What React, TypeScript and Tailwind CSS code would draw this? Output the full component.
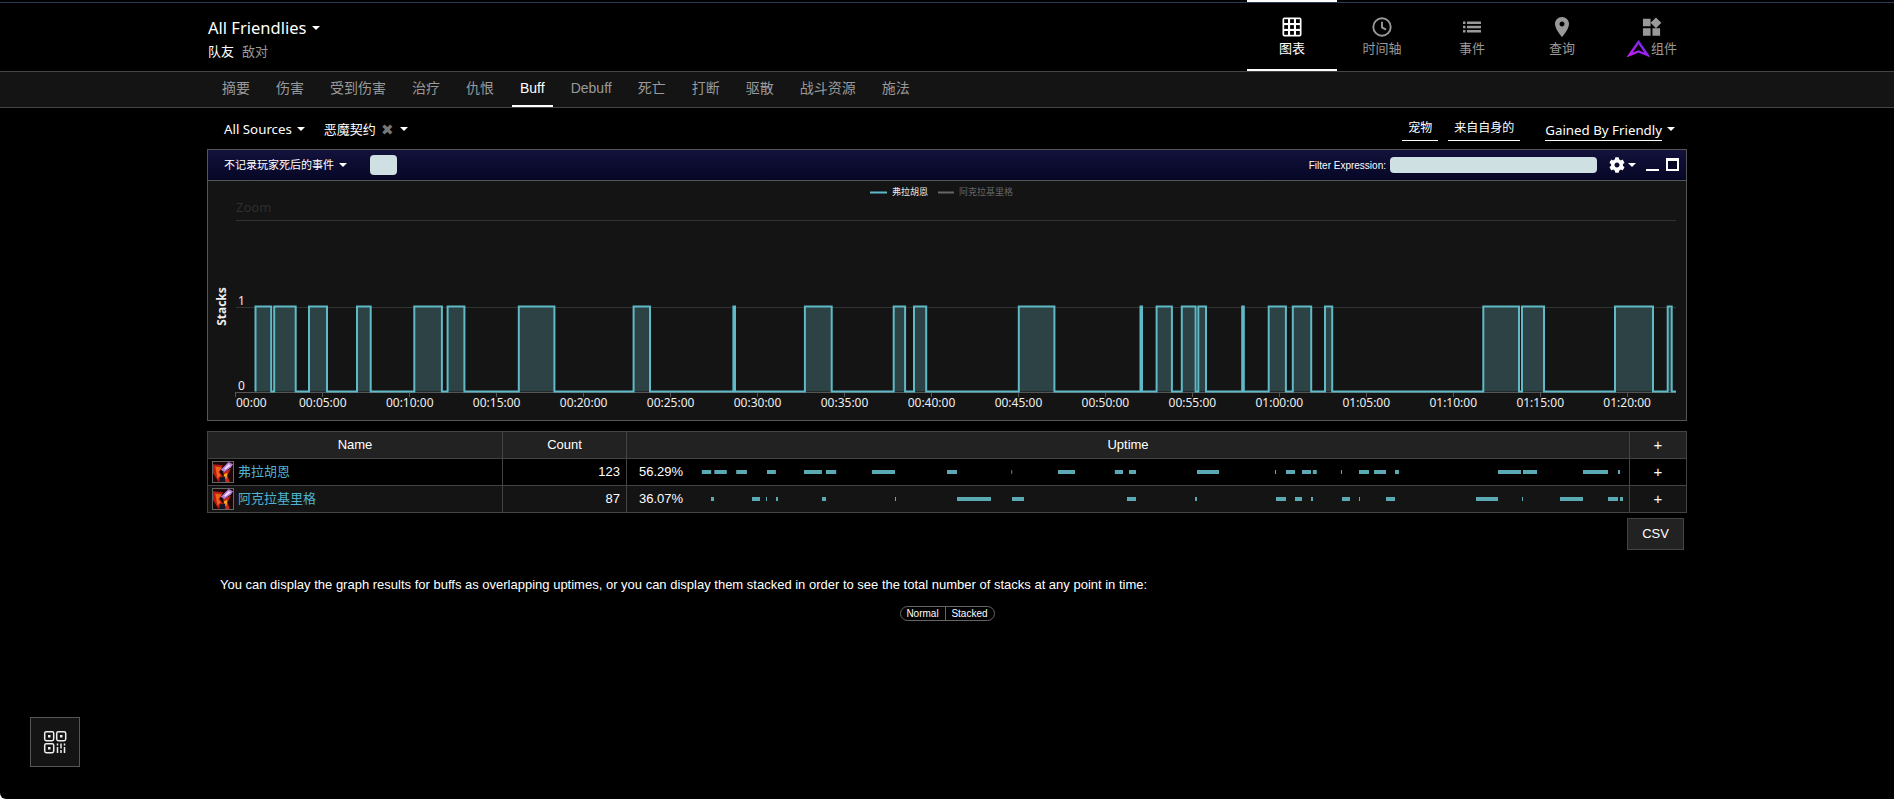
import React from "react";
import { FaCog } from "react-icons/fa";

const segs: [number, number][] = [
  [255.5, 271.2], [274.2, 295.7], [309, 327], [357, 370.7], [414.3, 441.9], [447.6, 464.4], [518.8, 554.4],
  [633.6, 650], [733.4, 735], [804.9, 831.7], [893.7, 905.1], [914, 926.2], [1018.8, 1054.4], [1140.5, 1142],
  [1156.6, 1171.9], [1181.8, 1195.6], [1198.3, 1206], [1242.2, 1243.8], [1268.7, 1285.9], [1292.8, 1311.2],
  [1325, 1332.2], [1483.3, 1519], [1522, 1544], [1615, 1653], [1667.7, 1671.7],
];
const row1: [number, number][] = [
  [701.8, 711.2], [714.3, 726.8], [736.2, 746.9], [767, 775.9], [804, 821.9], [825.9, 836.2], [871.9, 895], [947, 957],
  [1011.4, 1012.2], [1058, 1075], [1114.8, 1123], [1129, 1136], [1197, 1219], [1275, 1276], [1286, 1295], [1302, 1311],
  [1312.8, 1316.8], [1341, 1342], [1359, 1369], [1374, 1386], [1395, 1399], [1498, 1521], [1523, 1537], [1583, 1608], [1618, 1620],
];
const row2: [number, number][] = [
  [711, 714], [752, 760], [766, 767], [776, 778], [822, 826], [895, 896], [957, 991], [1012, 1024], [1127, 1136],
  [1195, 1197], [1276, 1286], [1295, 1302], [1311, 1313], [1342, 1350], [1359, 1360], [1386, 1395], [1476, 1498],
  [1522, 1523], [1560, 1583], [1608, 1618], [1620, 1623],
];

const TOP = 306.5;
const BASE = 391.5;
const linePath = `M255.5 ${BASE} ` + segs.map(([a, b]) => `H${a} V${TOP} H${b} V${BASE}`).join(" ") + " H1676";
const TICK0 = 235.3;
const STEP = 86.96;
const fmt = (i: number) => {
  const m = i * 5;
  const h = Math.floor(m / 60);
  const mm = m % 60;
  return `${String(h).padStart(2, "0")}:${String(mm).padStart(2, "0")}:00`;
};

const SANS = "font-['Liberation_Sans','Noto_Sans_CJK_SC',sans-serif]";
const UI = "font-['Noto_Sans','Noto_Sans_CJK_SC',sans-serif]";

function Caret({ c = "border-t-white" }: { c?: string }) {
  return <span className={`inline-block h-0 w-0 border-x-[4px] border-t-[4px] border-x-transparent ${c}`} />;
}

function GridIcon() {
  return (
    <svg width="20" height="20" viewBox="0 0 20 20">
      <rect x="0.5" y="0.5" width="19" height="19" rx="2" fill="#fff" />
      {[2.2, 8.1, 14].map((x) =>
        [2.2, 8.1, 14].map((y) => <rect key={`${x}-${y}`} x={x} y={y} width="3.8" height="3.8" fill="#000" />)
      )}
    </svg>
  );
}
function ClockIcon() {
  return (
    <svg width="20" height="20" viewBox="0 0 20 20" fill="none" stroke="#999" strokeWidth="1.9">
      <circle cx="10" cy="10" r="8.7" />
      <path d="M10 4.8V10.4L14 12.6" />
    </svg>
  );
}
function ListIcon() {
  return (
    <svg width="20" height="20" viewBox="0 0 20 20" fill="#999">
      <rect x="1" y="4.5" width="2.5" height="2.5" />
      <rect x="5" y="4.5" width="14" height="2.5" />
      <rect x="1" y="8.8" width="2.5" height="2.5" />
      <rect x="5" y="8.8" width="14" height="2.5" />
      <rect x="1" y="13" width="2.5" height="2.5" />
      <rect x="5" y="13" width="14" height="2.5" />
    </svg>
  );
}
function PinIcon() {
  return (
    <svg width="22" height="22" viewBox="3 1 18 22" fill="#999" className="-my-px">
      <path d="M12 2C8.13 2 5 5.13 5 9c0 5.25 7 13 7 13s7-7.75 7-13c0-3.87-3.13-7-7-7zm0 9.5c-1.38 0-2.5-1.12-2.5-2.5s1.12-2.5 2.5-2.5 2.5 1.12 2.5 2.5-1.12 2.5-2.5 2.5z" />
    </svg>
  );
}
function WidgetIcon() {
  return (
    <svg width="20" height="20" viewBox="2 1.5 21 20.5" fill="#999">
      <path d="M13 13v8h8v-8h-8zM3 21h8v-8H3v8zM3 3v8h8V3H3zm13.66-1.31L11 7.34 16.66 13l5.66-5.66-5.66-5.65z" />
    </svg>
  );
}
function ArrowLogo() {
  return (
    <svg width="23" height="17" viewBox="0 0 23 17" fill="none" className="-my-px mr-px">
      <defs>
        <linearGradient id="lg" x1="0" y1="1" x2="1" y2="0">
          <stop offset="0" stopColor="#c020f0" />
          <stop offset="1" stopColor="#6a28e8" />
        </linearGradient>
      </defs>
      <path d="M11.5 2 L20.5 15 L11.5 11.5 L2.5 15 Z" stroke="url(#lg)" strokeWidth="2.4" strokeLinejoin="miter" />
    </svg>
  );
}

function BuffIcon() {
  return (
    <div className="h-[22px] w-[22px] shrink-0 border border-[#666] bg-black">
      <svg width="20" height="20" viewBox="0 0 18 18" className="block">
        <rect width="18" height="18" fill="#1c0606" />
        <path d="M0 2 L9 3 L6 9 L9 13 L5 18 L0 10Z" fill="#b81c12" />
        <path d="M2 4 L8 5 L5 9 L7 12 L4 15Z" fill="#f0601a" />
        <path d="M9 9 L16 6 L13 12 L15 18 L8 18 L10 13Z" fill="#c82a18" />
        <path d="M10 11 L13 10 L12 15 L9 16Z" fill="#ffa820" />
        <path d="M7 7 L14 0 L18 2 L16 5 L10 9Z" fill="#b583dc" />
        <path d="M10 6 L14 2 L16 3 L11 7Z" fill="#f4e0ff" />
        <path d="M6 14 L11 13 L11 18 L6 18Z" fill="#141428" />
      </svg>
    </div>
  );
}

function Bars({ data }: { data: [number, number][] }) {
  return (
    <svg width="924" height="4" viewBox="701 0 924 4" className="block shrink-0">
      {data.map(([a, b]) => (
        <rect key={a} x={a} y="0" width={b - a} height="4" fill="#5aa9b3" />
      ))}
    </svg>
  );
}

function Chart() {
  return (
    <svg width="1478" height="239" viewBox="208 181 1478 239" className="block bg-[#141414]">
      <text x="236" y="212" fontSize="13" fill="#2e2e2e" fontFamily="Noto Sans">Zoom</text>
      <line x1="236" x2="1676" y1="220.5" y2="220.5" stroke="#333" />
      <line x1="236" x2="1676" y1="307.5" y2="307.5" stroke="#333" />
      <line x1="235" x2="1676" y1="392.5" y2="392.5" stroke="#555" />
      {Array.from({ length: 17 }, (_, i) => {
        const x = Math.round(TICK0 + STEP * i) + 0.5;
        return <line key={i} x1={x} x2={x} y1="392" y2="397" stroke="#555" />;
      })}
      {segs.map(([a, b]) => (
        <rect key={a} x={a} y={TOP} width={b - a} height={BASE - TOP} fill="#2c4245" />
      ))}
      <path d={linePath} fill="none" stroke="#5fb9c6" strokeWidth="2" />
      <line x1="870" x2="887" y1="192.5" y2="192.5" stroke="#5fb9c6" strokeWidth="2" />
      <text x="892" y="195" fontSize="9" fill="#e8e8e8" fontFamily="Noto Sans CJK SC">弗拉胡恩</text>
      <line x1="938" x2="954" y1="192.5" y2="192.5" stroke="#666" strokeWidth="2" />
      <text x="959" y="195" fontSize="9" fill="#666" fontFamily="Noto Sans CJK SC">阿克拉基里格</text>
      <text x="0" y="0" fontSize="12" fontWeight="700" fill="#eee" fontFamily="Noto Sans" textAnchor="middle" transform="translate(226 306.5) rotate(-90)">Stacks</text>
      <text x="238" y="305" fontSize="12" fill="#eee" fontFamily="Noto Sans">1</text>
      <text x="238" y="390" fontSize="12" fill="#eee" fontFamily="Noto Sans">0</text>
      <text x="236" y="406.5" fontSize="12" fill="#eee" fontFamily="Noto Sans">00:00</text>
      {Array.from({ length: 16 }, (_, k) => {
        const i = k + 1;
        return (
          <text key={i} x={TICK0 + STEP * i + 0.5} y="406.5" fontSize="12" fill="#eee" fontFamily="Noto Sans" textAnchor="middle">
            {fmt(i)}
          </text>
        );
      })}
    </svg>
  );
}

const tabs = ["摘要", "伤害", "受到伤害", "治疗", "仇恨", "Buff", "Debuff", "死亡", "打断", "驱散", "战斗资源", "施法"];
const navs = [
  { icon: <GridIcon />, label: "图表", active: true },
  { icon: <ClockIcon />, label: "时间轴" },
  { icon: <ListIcon />, label: "事件" },
  { icon: <PinIcon />, label: "查询" },
];

const cell = "flex items-center border-r border-[#444]";
const COLS = "grid-cols-[295px_124px_1003px_57px]";

function Row({ name, count, pct, data, bg }: { name: string; count: number; pct: string; data: [number, number][]; bg: string }) {
  return (
    <div className={`grid h-[27px] ${COLS} border-b border-l border-[#444] text-[13px] ${bg}`}>
      <div className={`${cell} gap-[4px] pl-[4px]`}>
        <BuffIcon />
        <span className="-mt-px text-[#4fb3cf]">{name}</span>
      </div>
      <div className={`${cell} justify-end pr-[6px] text-white`}>{count}</div>
      <div className={`${cell} pl-[12px] text-white`}>
        <span className="w-[62px] shrink-0">{pct}</span>
        <Bars data={data} />
      </div>
      <div className={`${cell} justify-center text-[15px] text-white`}>+</div>
    </div>
  );
}

export default function App() {
  return (
    <div className={`relative h-[801px] w-full overflow-hidden bg-white ${SANS}`}>
      <div className="h-[799px] rounded-bl-[6px] bg-black text-white">
        <div className="h-[3px] border-b border-[#2b3a55]" />
        <header className="h-[69px] border-b border-[#444]">
          <div className="mx-auto flex h-[68px] w-[1480px] justify-between">
            <div className={`pl-px pt-[13px] ${UI}`}>
              <div className="flex items-center gap-[6px] text-[16.5px] leading-[24px] text-white">
                All Friendlies <Caret />
              </div>
              <div className="mt-[2px] flex gap-[8px] text-[13px] leading-[18px]">
                <span className="text-white">队友</span>
                <span className="text-[#999]">敌对</span>
              </div>
            </div>
            <div className="-mr-[10px] -mt-[3px] flex h-[71px]">
              {navs.map((n) => (
                <div
                  key={n.label}
                  className={`flex w-[90px] flex-col items-center border-y-2 pt-[15px] ${n.active ? "border-white" : "border-transparent"}`}
                >
                  <div className="h-[20px]">{n.icon}</div>
                  <div className={`mt-[3px] text-[13px] leading-[16px] ${UI} ${n.active ? "text-white" : "text-[#999]"}`}>{n.label}</div>
                </div>
              ))}
              <div className="flex w-[90px] flex-col items-center border-y-2 border-transparent pt-[15px]">
                <div className="h-[20px]"><WidgetIcon /></div>
                <div className={`mt-[3px] flex h-[16px] items-center text-[13px] leading-[16px] text-[#999] ${UI}`}>
                  <ArrowLogo />
                  组件
                </div>
              </div>
            </div>
          </div>
        </header>

        <nav className="h-[36px] border-b border-[#444] bg-[#141414]">
          <div className="mx-auto flex h-[35px] w-[1480px] gap-[10px] pl-[7px]">
            {tabs.map((t) => (
              <div
                key={t}
                className={`flex items-center border-b-2 px-2 text-[14px] ${t === "Buff" ? "border-white text-white" : "border-transparent text-[#999]"}`}
              >
                {t}
              </div>
            ))}
          </div>
        </nav>

        <main className="mx-auto w-[1480px]">
          <div className="flex h-[41px] items-center justify-between pl-[17px] pr-[12px]">
            <div className={`mt-[3px] flex items-center text-[13.3px] text-white ${UI}`}>
              All Sources
              <span className="ml-[5px] mr-[19px] -mt-[2px] flex"><Caret /></span>
              <span className="text-[13px]">恶魔契约</span>
              <span className="ml-[5px] font-['DejaVu_Sans'] text-[15px] leading-none text-[#777]">✖</span>
              <span className="ml-[7px] -mt-[2px] flex"><Caret /></span>
            </div>
            <div className={`mt-[4px] flex items-center text-white ${UI}`}>
              <span className="mr-[10px] mt-[-2px] border-b border-white px-[6px] pb-[3px] text-[12px] leading-[18px]">宠物</span>
              <span className="mr-[25px] mt-[-2px] border-b border-white px-[6px] pb-[3px] text-[12px] leading-[18px]">来自自身的</span>
              <span className="border-b border-white text-[13.3px] leading-[19px]">Gained By Friendly</span>
              <span className="ml-[5px] -mt-[3px] flex"><Caret /></span>
            </div>
          </div>

          <section className="h-[272px] border border-[#555]">
            <div className="flex h-[31px] items-center justify-between border-b border-[#555] bg-gradient-to-b from-[#12123c] to-[#070726] pl-[16px] pr-[7px]">
              <div className="flex items-center">
                <span className={`text-[11px] text-white ${UI}`}>不记录玩家死后的事件</span>
                <span className="ml-[5px] flex"><Caret /></span>
                <div className="ml-[23px] h-[20px] w-[27px] rounded-[4px] bg-[#cfe0e3]" />
              </div>
              <div className="flex items-center">
                <span className="text-[10px] text-white">Filter Expression:</span>
                <div className="ml-[4px] h-[16px] w-[207px] rounded-[4px] bg-[#cfe0e3]" />
                <FaCog className="ml-[12px] text-white" size={16} />
                <span className="ml-[3px] flex"><Caret /></span>
                <div className="ml-[10px] mt-[9px] h-[2px] w-[13px] bg-white" />
                <div className="-mt-[2px] ml-[7px] h-[13px] w-[13px] border-2 border-t-[3px] border-white bg-[#070726]" />
              </div>
            </div>
            <Chart />
          </section>

          <section className="mt-[10px]">
            <div className={`grid h-[28px] ${COLS} border-y border-l border-[#444] bg-[#222] text-[13px] text-white`}>
              <div className={`${cell} justify-center`}>Name</div>
              <div className={`${cell} justify-center`}>Count</div>
              <div className={`${cell} justify-center`}>Uptime</div>
              <div className={`${cell} justify-center text-[15px]`}>+</div>
            </div>
            <Row name="弗拉胡恩" count={123} pct="56.29%" data={row1} bg="bg-black" />
            <Row name="阿克拉基里格" count={87} pct="36.07%" data={row2} bg="bg-[#141414]" />
          </section>

          <div className="mt-[5px] flex justify-end pr-[3px]">
            <button className="h-[32px] w-[57px] border border-[#444] bg-[#222] text-[13px] text-white">CSV</button>
          </div>

          <p className="mt-[26px] pl-[13px] text-[13px] leading-[18px] text-white">
            You can display the graph results for buffs as overlapping uptimes, or you can display them stacked in order to see the total number of stacks at any point in time:
          </p>

          <div className="mt-[12px] flex justify-center">
            <div className="flex h-[15px] w-[95px] overflow-hidden rounded-full border border-[#666] text-[10px] leading-[13px] text-white">
              <span className="w-[45px] border-r border-[#666] text-center">Normal</span>
              <span className="flex-1 text-center">Stacked</span>
            </div>
          </div>
        </main>
      </div>

      <button className="absolute left-[30px] top-[717px] flex h-[50px] w-[50px] items-center justify-center border border-[#555] bg-[#141414]">
        <svg width="24" height="24" viewBox="0 0 24 24" fill="none" stroke="#eee" strokeWidth="1.5">
          <rect x="1.7" y="1.7" width="9" height="9" rx="1.6" />
          <rect x="13.7" y="1.7" width="9" height="9" rx="1.6" />
          <rect x="1.7" y="13.7" width="9" height="9" rx="1.6" />
          <rect x="5" y="5" width="2.5" height="2.5" fill="#eee" stroke="none" />
          <rect x="17" y="5" width="2.5" height="2.5" fill="#eee" stroke="none" />
          <rect x="5" y="17" width="2.5" height="2.5" fill="#eee" stroke="none" />
          <path d="M14.5 13.5v2M14.5 17v6M18 13.5v5M18 20v3M21.5 13.5v2M21.5 17v6" />
        </svg>
      </button>
    </div>
  );
}
